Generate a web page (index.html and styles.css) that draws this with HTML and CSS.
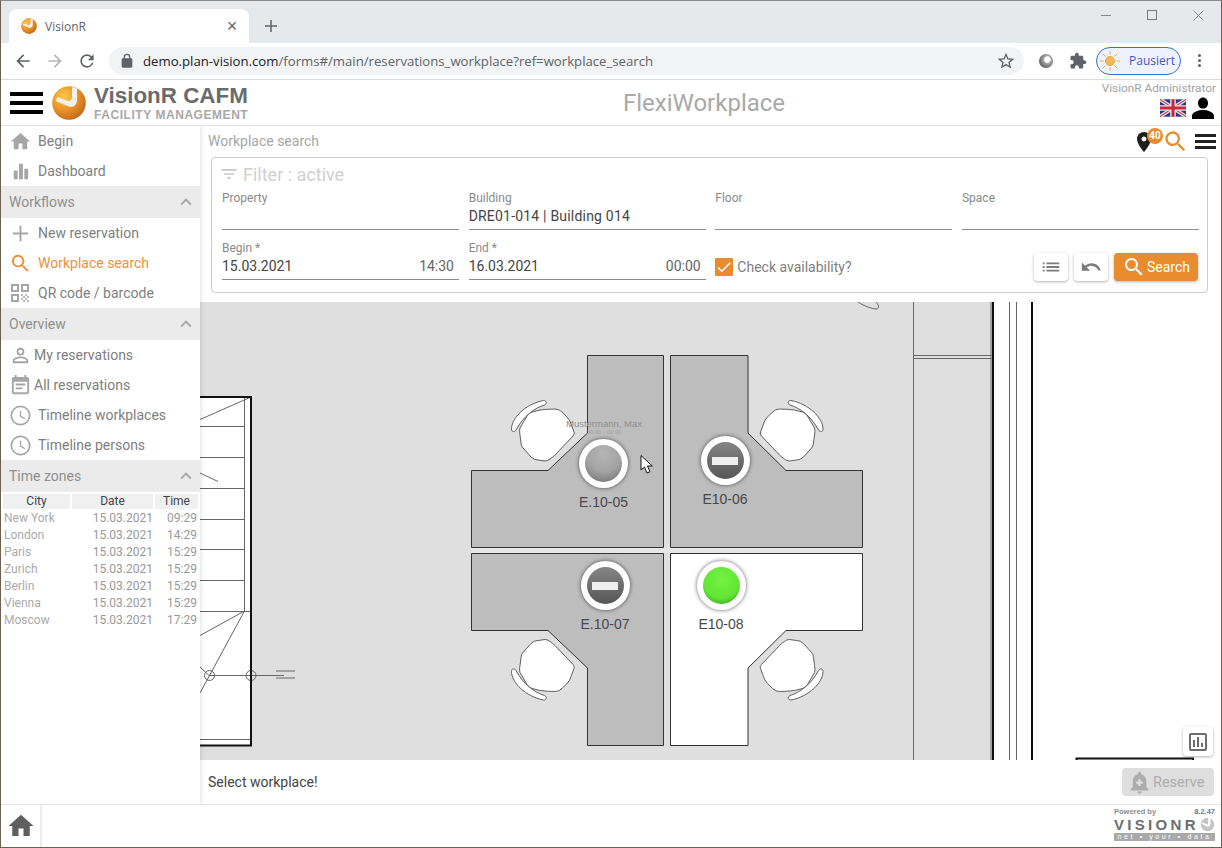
FILE: index.html
```html
<!DOCTYPE html>
<html lang="en">
<head>
<meta charset="utf-8">
<title>VisionR</title>
<link rel="stylesheet" href="styles.css">
</head>
<body>
<svg class="sprite" aria-hidden="true">
  <defs>
    <radialGradient id="orb" cx="35%" cy="30%" r="80%">
      <stop offset="0" stop-color="#f9c94a"/><stop offset=".5" stop-color="#ec9327"/><stop offset="1" stop-color="#b9641a"/>
    </radialGradient>
    <radialGradient id="markGray" cx="50%" cy="25%" r="80%">
      <stop offset="0" stop-color="#b5b5b5"/><stop offset=".6" stop-color="#a2a2a2"/><stop offset="1" stop-color="#777"/>
    </radialGradient>
    <linearGradient id="markDark" x1="0" y1="0" x2="0" y2="1">
      <stop offset="0" stop-color="#858585"/><stop offset="1" stop-color="#565656"/>
    </linearGradient>
    <radialGradient id="markGreen" cx="50%" cy="35%" r="70%">
      <stop offset="0" stop-color="#74f244"/><stop offset=".7" stop-color="#62e534"/><stop offset="1" stop-color="#3fae23"/>
    </radialGradient>
    <symbol id="logo" viewBox="0 0 34 34">
      <circle cx="17" cy="17" r="16.8" fill="url(#orb)"/>
      <path d="M20 1l5 1.500V15q-1 6-7 6L3.500 15l2-4 10.500 4q4 0 4-4z" fill="#f4efe9"/>
    </symbol>
    <symbol id="i-home" viewBox="0 0 24 24"><path d="M10 20v-6h4v6h5v-8h3L12 3 2 12h3v8z"/></symbol>
    <symbol id="i-bars" viewBox="0 0 24 24"><path d="M5 11h4v9H5zM10.500 4h4v16h-4zM16 9h4v11h-4z"/></symbol>
    <symbol id="i-plus" viewBox="0 0 24 24"><path d="M20 13h-7v7h-2v-7H4v-2h7V4h2v7h7z"/></symbol>
    <symbol id="i-search" viewBox="0 0 24 24"><path d="M15.500 14h-.79l-.28-.27A6.500 6.500 0 1 0 13.730 14.430l.27.28v.79l5 4.990L20.490 19zm-6 0a4.500 4.500 0 1 1 0-9 4.500 4.500 0 0 1 0 9z"/></symbol>
    <symbol id="i-qr" viewBox="0 0 20 20"><path d="M1 1h8v8H1zm2 2v4h4V3zM11 1h8v8h-8zm2 2v4h4V3zM1 11h8v8H1zm2 2v4h4v-4z" fill-rule="evenodd"/><path d="M11 11h2v2h-2zM15 11h2v2h-2zM13 13h2v2h-2zM17 13h2v2h-2zM11 15h2v2h-2zM15 15h2v2h-2zM13 17h2v2h-2zM17 17h2v2h-2z" opacity=".75"/></symbol>
    <symbol id="i-person-o" viewBox="0 0 24 24"><path d="M12 5.900a2.100 2.100 0 1 1 0 4.200 2.100 2.100 0 0 1 0-4.200m0 9c2.970 0 6.100 1.460 6.100 2.100v1.100H5.900V17c0-.64 3.130-2.100 6.100-2.100M12 4a4 4 0 1 0 0 8 4 4 0 0 0 0-8zm0 9c-2.670 0-8 1.340-8 4v3h16v-3c0-2.660-5.330-4-8-4z"/></symbol>
    <symbol id="i-event" viewBox="0 0 24 24"><path d="M17 10H7v2h10zm2-7h-1V1h-2v2H8V1H6v2H5c-1.110 0-1.990.9-1.990 2L3 19c0 1.100.89 2 2 2h14c1.100 0 2-.9 2-2V5c0-1.100-.9-2-2-2zm0 16H5V8h14zm-5-5H7v2h7z"/></symbol>
    <symbol id="i-clock" viewBox="0 0 24 24"><path d="M12 1.500a10.500 10.500 0 1 0 0 21 10.500 10.500 0 0 0 0-21zm0 19.200a8.700 8.700 0 1 1 0-17.400 8.700 8.700 0 0 1 0 17.400zM12.700 7h-1.400v6l5 3 .7-1.150-4.300-2.600z"/></symbol>
    <symbol id="i-chev" viewBox="0 0 24 24"><path d="M7.410 15.410L12 10.830l4.590 4.580L18 14l-6-6-6 6z"/></symbol>
    <symbol id="i-filter" viewBox="0 0 24 24"><path d="M10 18h4v-2h-4zM3 6v2h18V6zm3 7h12v-2H6z"/></symbol>
    <symbol id="i-list" viewBox="0 0 24 24"><path d="M3 13h2v-2H3zm0 4h2v-2H3zm0-8h2V7H3zm4 4h14v-2H7zm0 4h14v-2H7zM7 7v2h14V7z"/></symbol>
    <symbol id="i-undo" viewBox="0 0 24 24"><path d="M12.500 8c-2.650 0-5.050.99-6.900 2.600L2 7v9h9l-3.620-3.620c1.390-1.160 3.160-1.880 5.120-1.880 3.540 0 6.550 2.310 7.600 5.500l2.370-.78C21.080 11.030 17.150 8 12.500 8z"/></symbol>
    <symbol id="i-check" viewBox="0 0 24 24"><path d="M9 16.170L4.830 12l-1.420 1.410L9 19 21 7l-1.410-1.410z"/></symbol>
    <symbol id="i-pin" viewBox="0 0 24 24"><path d="M12 2C8.130 2 5 5.130 5 9c0 5.250 7 13 7 13s7-7.750 7-13c0-3.870-3.130-7-7-7zm0 9.500a2.500 2.500 0 0 1 0-5 2.500 2.500 0 0 1 0 5z"/></symbol>
    <symbol id="i-person" viewBox="0 0 24 24"><path d="M12 12.500c3 0 5-2.300 5-5.300S15 1.500 12 1.500 7 4.200 7 7.200s2 5.300 5 5.300zm0 1.500c-4 0-11 1.800-11 6v3h22v-3c0-4.200-7-6-11-6z"/></symbol>
    <symbol id="i-bell" viewBox="0 0 24 24"><path d="M12 22c1.100 0 2-.9 2-2h-4c0 1.100.9 2 2 2zm6-6v-5c0-3.070-1.630-5.640-4.500-6.320V4a1.500 1.500 0 0 0-3 0v.68C7.640 5.360 6 7.920 6 11v5l-2 2v1h16v-1zm-3-3h-2v2h-2v-2H9v-2h2V9h2v2h2z"/></symbol>
    <symbol id="i-poll" viewBox="0 0 24 24"><path d="M19 3H5c-1.100 0-2 .9-2 2v14c0 1.100.9 2 2 2h14c1.100 0 2-.9 2-2V5c0-1.100-.9-2-2-2zm0 16H5V5h14zM7 10h2v7H7zm4-3h2v10h-2zm4 6h2v4h-2z"/></symbol>
    <symbol id="i-puzzle" viewBox="0 0 24 24"><path d="M20.500 11H19V7c0-1.100-.9-2-2-2h-4V3.500a2.500 2.500 0 0 0-5 0V5H4c-1.100 0-1.990.9-1.990 2v3.800H3.500a2.700 2.700 0 0 1 0 5.400H2V20c0 1.100.9 2 2 2h3.800v-1.500a2.700 2.700 0 0 1 5.400 0V22H17c1.100 0 2-.9 2-2v-4h1.500a2.500 2.500 0 0 0 0-5z"/></symbol>
    <symbol id="i-star" viewBox="0 0 24 24"><path d="M22 9.240l-7.190-.62L12 2 9.190 8.630 2 9.240l5.460 4.730L5.820 21 12 17.270 18.180 21l-1.630-7.030zM12 15.400l-3.760 2.270 1-4.280-3.320-2.880 4.380-.38L12 6.100l1.710 4.040 4.380.38-3.320 2.880 1 4.280z"/></symbol>
    <symbol id="i-lock" viewBox="0 0 24 24"><path d="M18 8h-1V6A5 5 0 0 0 7 6v2H6c-1.100 0-2 .9-2 2v10c0 1.100.9 2 2 2h12c1.100 0 2-.9 2-2V10c0-1.100-.9-2-2-2zM9 6a3 3 0 0 1 6 0v2H9z"/></symbol>
    <symbol id="i-back" viewBox="0 0 24 24"><path d="M20 11H7.830l5.590-5.590L12 4l-8 8 8 8 1.410-1.410L7.830 13H20z"/></symbol>
    <symbol id="i-forward" viewBox="0 0 24 24"><path d="M12 4l-1.410 1.410L16.170 11H4v2h12.170l-5.580 5.590L12 20l8-8z"/></symbol>
    <symbol id="i-reload" viewBox="0 0 24 24"><path d="M17.650 6.350A7.960 7.960 0 0 0 12 4a8 8 0 1 0 7.730 10h-2.080A5.990 5.990 0 0 1 12 18a6 6 0 1 1 0-12c1.660 0 3.140.69 4.220 1.780L13 11h7V4z"/></symbol>
    <symbol id="chair" viewBox="0 0 1222 848">
      <path class="seat" d="M527 416q2-3 5-4l8-2q8-1 15-1 4 0 7 3l5 5q3 3 4 7l3 8q1 2-1 4l-18 19q-2 2-5 4-2 2-5 2l-7-1q-4 0-7-3l-8-9q-2-2-2-5l-1-8q-1-4 0-7z"/>
      <path class="seat" d="M511.500 429c0-11 14-25 32-28.500 3.500 0 3.500 3.500 1 4.500-10 3-21 11-28.500 25-2 2.500-4.500 2-4.500-1z"/>
    </symbol>
  </defs>
</svg>

<div class="window">
  <div class="tabbar">
    <div class="tab">
      <svg class="favicon"><use href="#logo"/></svg>
      <span class="tab-title">VisionR</span>
      <span class="tab-x">×</span>
    </div>
    <svg class="ic newtab"><use href="#i-plus"/></svg>
    <div class="winctl">
      <span class="win-min"></span>
      <span class="win-max"></span>
      <svg class="win-close" viewBox="0 0 11 11"><path d="M.5.500l10 10M10.500.500l-10 10"/></svg>
    </div>
  </div>

  <div class="toolbar">
    <svg class="ic nav"><use href="#i-back"/></svg>
    <svg class="ic nav nav-off"><use href="#i-forward"/></svg>
    <svg class="ic nav"><use href="#i-reload"/></svg>
    <div class="omnibox">
      <svg class="ic lock"><use href="#i-lock"/></svg>
      <span class="url"><span class="url-host">demo.plan-vision.com</span>/forms#/main/reservations_workplace?ref=workplace_search</span>
      <svg class="ic star"><use href="#i-star"/></svg>
    </div>
    <span class="ext-orb"></span>
    <svg class="ic puzzle"><use href="#i-puzzle"/></svg>
    <div class="profile">
      <svg class="sun" viewBox="0 0 24 24"><circle cx="12" cy="12" r="5"/><path d="M12 1v4M12 19v4M1 12h4M19 12h4M4 4l3 3M17 17l3 3M20 4l-3 3M7 17l-3 3"/></svg>
      <span>Pausiert</span>
    </div>
    <div class="dots"><i></i><i></i><i></i></div>
  </div>

  <header class="apphead">
    <div class="burger"><i></i><i></i><i></i></div>
    <svg class="brand-logo"><use href="#logo"/></svg>
    <div class="brand">
      <div class="brand-name">VisionR CAFM</div>
      <div class="brand-sub">FACILITY MANAGEMENT</div>
    </div>
    <div class="app-title">FlexiWorkplace</div>
    <div class="userbox">
      <div class="username">VisionR Administrator</div>
      <div class="useractions">
        <svg class="flag" viewBox="0 0 60 40">
          <rect width="60" height="40" fill="#2b3a80"/>
          <path d="M0 0l60 40M60 0L0 40" stroke="#e8e8ee" stroke-width="8"/>
          <path d="M0 0l60 40M60 0L0 40" stroke="#c8283c" stroke-width="2.500"/>
          <path d="M30 0v40M0 20h60" stroke="#e8e8ee" stroke-width="13"/>
          <path d="M30 0v40M0 20h60" stroke="#c8283c" stroke-width="7"/>
        </svg>
        <svg class="ic user"><use href="#i-person"/></svg>
      </div>
    </div>
  </header>

  <div class="main">
    <aside class="sidebar">
      <a class="item"><svg class="ic it-icon"><use href="#i-home"/></svg>Begin</a>
      <a class="item"><svg class="ic it-icon"><use href="#i-bars"/></svg>Dashboard</a>
      <div class="section">Workflows<svg class="ic chev"><use href="#i-chev"/></svg></div>
      <a class="item"><svg class="ic it-icon"><use href="#i-plus"/></svg>New reservation</a>
      <a class="item item-active"><svg class="ic it-icon"><use href="#i-search"/></svg>Workplace search</a>
      <a class="item"><svg class="ic it-icon it-qr"><use href="#i-qr"/></svg>QR code / barcode</a>
      <div class="section">Overview<svg class="ic chev"><use href="#i-chev"/></svg></div>
      <a class="item item-tight"><svg class="ic it-icon"><use href="#i-person-o"/></svg>My reservations</a>
      <a class="item item-tight"><svg class="ic it-icon"><use href="#i-event"/></svg>All reservations</a>
      <a class="item"><svg class="ic it-icon"><use href="#i-clock"/></svg>Timeline workplaces</a>
      <a class="item"><svg class="ic it-icon"><use href="#i-clock"/></svg>Timeline persons</a>
      <div class="section">Time zones<svg class="ic chev"><use href="#i-chev"/></svg></div>
      <table class="zones">
        <thead><tr><th class="c-city">City</th><th class="c-date">Date</th><th class="c-time">Time</th></tr></thead>
        <tbody>
          <tr><td>New York</td><td>15.03.2021</td><td>09:29</td></tr>
          <tr><td>London</td><td>15.03.2021</td><td>14:29</td></tr>
          <tr><td>Paris</td><td>15.03.2021</td><td>15:29</td></tr>
          <tr><td>Zurich</td><td>15.03.2021</td><td>15:29</td></tr>
          <tr><td>Berlin</td><td>15.03.2021</td><td>15:29</td></tr>
          <tr><td>Vienna</td><td>15.03.2021</td><td>15:29</td></tr>
          <tr><td>Moscow</td><td>15.03.2021</td><td>17:29</td></tr>
        </tbody>
      </table>
    </aside>

    <section class="content">
      <div class="crumbbar">
        <span class="crumb">Workplace search</span>
        <div class="crumb-tools">
          <span class="pinwrap">
            <svg class="ic pin"><use href="#i-pin"/></svg>
            <span class="badge">40</span>
          </span>
          <svg class="ic tool-search"><use href="#i-search"/></svg>
          <div class="mini-burger"><i></i><i></i><i></i></div>
        </div>
      </div>

      <form class="panel">
        <div class="panel-head"><svg class="ic filter"><use href="#i-filter"/></svg>Filter : active</div>
        <div class="fields">
          <div class="field"><label>Property</label><div class="value"></div></div>
          <div class="field"><label>Building</label><div class="value value-wide">DRE01-014 | Building 014</div></div>
          <div class="field"><label>Floor</label><div class="value"></div></div>
          <div class="field"><label>Space</label><div class="value"></div></div>
          <div class="field"><label>Begin *</label><div class="value"><span>15.03.2021</span><span class="time">14:30</span></div></div>
          <div class="field"><label>End *</label><div class="value"><span>16.03.2021</span><span class="time">00:00</span></div></div>
          <div class="check"><span class="box"><svg class="ic"><use href="#i-check"/></svg></span>Check availability?</div>
          <div class="actions">
            <button type="button" class="btn"><svg class="ic"><use href="#i-list"/></svg></button>
            <button type="button" class="btn"><svg class="ic"><use href="#i-undo"/></svg></button>
            <button type="button" class="btn btn-primary"><svg class="ic"><use href="#i-search"/></svg>Search</button>
          </div>
        </div>
      </form>

      <div class="plan">
        <svg class="plan-svg" viewBox="200 302 1021 458">
          <rect x="200" y="302" width="793" height="458" fill="#dfdfdf"/>
          <rect x="994" y="302" width="228" height="458" fill="#fff"/>

          <!-- stairs -->
          <rect x="200" y="397" width="51" height="348.500" fill="#fff"/>
          <path class="ln" d="M244.500 397V611M200 426.500h44.500M200 457.500h44.500M200 488.500h44.500M200 519.500h44.500M200 549.500h44.500M200 580.500h44.500M200 611.500h51M251 397l-51 22.500M200 473l18 8.500M244.500 611L200 635.500M244.500 611L200 693M200 667l9 8.500M209 675.500h75M276 671h19M276 678h19M200 739.500h51"/>
          <circle class="ln" cx="209.500" cy="675.500" r="5"/>
          <circle class="ln" cx="251" cy="675.500" r="5"/>
          <path class="wall" d="M200 397h51v348.500h-51"/>

          <!-- right walls -->
          <path class="ln" d="M913.500 302V760M913.500 355.500h78M913.500 358.500h78M991 302V760M1009.500 302V760M1016.500 302V760M858 302c6 4 14 7 19 7 3-1 1-5-1-7"/>
          <path class="wall" d="M993 302V760M1032 302V760M1076.500 760v-1.500h116.500v1.500"/>

          <!-- desks -->
          <rect x="471" y="547" width="392" height="6" fill="#e6e6e6"/>
          <polygon class="desk" points="587.500,355.500 663.500,355.500 663.500,547.500 471.500,547.500 471.500,470.500 548,470.500 587.500,433"/>
          <polygon class="desk" points="670.500,355.500 748,355.500 748,433 786,470.500 862.500,470.500 862.500,547.500 670.500,547.500"/>
          <polygon class="desk" points="471.500,553.500 663.500,553.500 663.500,745.500 587.500,745.500 587.500,668 548,630.500 471.500,630.500"/>
          <polygon class="desk desk-free" points="670.500,553.500 862.500,553.500 862.500,630.500 786,630.500 748,668 748,745.500 670.500,745.500"/>

          <!-- chairs -->
          <use href="#chair" width="1222" height="848" x="0" y="0"/>
          <use href="#chair" width="1222" height="848" transform="translate(1334.500 0) scale(-1 1)"/>
          <use href="#chair" width="1222" height="848" transform="translate(0 1100.500) scale(1 -1)"/>
          <use href="#chair" width="1222" height="848" transform="translate(1334.500 1100.500) scale(-1 -1)"/>

          <!-- markers -->
          <text class="occupant" x="604" y="427">Mustermann, Max</text>
          <text class="occupant-time" x="604" y="434">00:00 - 00:00</text>

          <circle class="ring" cx="603.500" cy="463.500" r="24.500"/>
          <circle cx="603.500" cy="463.500" r="18.500" fill="url(#markGray)"/>
          <text class="spot" x="603.500" y="507">E.10-05</text>

          <circle class="ring" cx="725.500" cy="460.500" r="24.500"/>
          <circle cx="725.500" cy="460.500" r="18.500" fill="url(#markDark)"/>
          <rect x="712" y="457" width="26" height="8" fill="#eee"/>
          <text class="spot" x="725" y="504">E10-06</text>

          <circle class="ring" cx="605.500" cy="585.500" r="24.500"/>
          <circle cx="605.500" cy="585.500" r="18.500" fill="url(#markDark)"/>
          <rect x="592" y="582" width="26" height="8" fill="#eee"/>
          <text class="spot" x="605" y="629">E.10-07</text>

          <circle class="ring" cx="721.500" cy="585.500" r="24.500"/>
          <circle cx="721.500" cy="585.500" r="18.500" fill="url(#markGreen)"/>
          <text class="spot" x="721" y="629">E10-08</text>

          <path class="cursor" d="M641 455.500V470l3.500-3 2.500 6 3-1.300-2.500-5.700h4.800z"/>
        </svg>
        <button type="button" class="chart-btn"><svg class="ic"><use href="#i-poll"/></svg></button>
      </div>

      <div class="statusbar">
        <span class="status-text">Select workplace!</span>
        <button type="button" class="reserve"><svg class="ic"><use href="#i-bell"/></svg>Reserve</button>
      </div>
    </section>
  </div>

  <footer class="appfoot">
    <div class="foot-home"><svg class="ic"><use href="#i-home"/></svg></div>
    <div class="foot-brand">
      <div class="foot-top"><span>Powered by</span><span class="foot-ver">8.2.47</span></div>
      <div class="foot-name">VISIONR<svg class="foot-orb" viewBox="0 0 20 20"><circle cx="10" cy="10" r="9" fill="#c4c4c4"/><path d="M11 1h3v9q-1 3-4 3L2 9l1-2 7 3q1 0 1-2z" fill="#fff"/></svg></div>
      <div class="foot-tag">net • your • data</div>
    </div>
  </footer>
</div>
</body>
</html>
```

FILE: styles.css
```css
* { box-sizing: border-box; }
html, body { margin: 0; padding: 0; background: #fff; }
body { font-family: Roboto, "Liberation Sans", sans-serif; overflow: hidden; }
.sprite { position: absolute; width: 0; height: 0; }
.ic { width: 24px; height: 24px; fill: currentColor; display: block; flex: none; }

.window {
  width: 1222px; height: 848px; display: flex; flex-direction: column;
  border-top: 1px solid #8b8b8b; border-left: 1px solid #6e6050;
  border-right: 1px solid #6e6050; border-bottom: 1px solid #6e6050;
  overflow: hidden;
}

/* browser chrome */
.tabbar { height: 42px; flex: none; background: #e6e9ec; display: flex; align-items: flex-end; padding-left: 8px; }
.tab { width: 240px; height: 34px; background: #fff; border-radius: 8px 8px 0 0; display: flex; align-items: center; padding: 0 9px 0 12px; }
.favicon { width: 16px; height: 16px; flex: none; }
.tab-title { font: 12px "Open Sans", sans-serif; color: #5f6368; margin-left: 8px; flex: 1; }
.tab-x { font: 18px "Liberation Sans", sans-serif; color: #5f6368; width: 16px; text-align: center; }
.newtab { width: 18px; height: 18px; color: #5f6368; margin: 0 0 8px 13px; }
.winctl { margin-left: auto; align-self: flex-start; display: flex; align-items: center; height: 28px; padding-right: 17px; gap: 36px; }
.win-min { width: 10px; height: 1px; background: #8a8a8a; }
.win-max { width: 10px; height: 10px; border: 1px solid #777; }
.win-close { width: 11px; height: 11px; fill: none; stroke: #8a8a8a; stroke-width: 1; }

.toolbar { height: 37px; flex: none; background: #fff; border-bottom: 1px solid #dadce0; display: flex; align-items: center; padding: 0 0 1px 0; }
.nav { width: 20px; height: 20px; color: #5f6368; margin-left: 12px; }
.nav-off { color: #b4b6b9; }
.omnibox { width: 915px; height: 28px; margin-left: 12px; background: #f1f3f4; border-radius: 14px; display: flex; align-items: center; padding: 0 8px 0 10px; }
.lock { width: 16px; height: 16px; color: #5f6368; }
.url { font: 13.180px "Open Sans", sans-serif; color: #5f6368; margin-left: 8px; flex: 1; white-space: nowrap; }
.url-host { color: #202124; }
.star { width: 20px; height: 20px; color: #5f6368; }
.ext-orb { width: 14px; height: 14px; border-radius: 50%; margin-left: 15px; background: radial-gradient(circle at 60% 40%, #fff 0 25%, #aaa 30%, #555 80%); }
.puzzle { width: 18px; height: 18px; color: #5f6368; margin-left: 16px; }
.profile { width: 85px; height: 28px; margin-left: 9px; border: 1px solid #2f74d0; border-radius: 14px; background: #edf2fc; display: flex; align-items: center; padding-left: 2px; font: 12px "Open Sans", sans-serif; color: #4a55c4; gap: 8px; }
.sun { width: 22px; height: 22px; fill: #f3b75a; stroke: #eea43c; stroke-width: 1; flex: none; }
.dots { margin-left: 17px; display: flex; flex-direction: column; gap: 2px; }
.dots i { width: 3px; height: 3px; border-radius: 50%; background: #5f6368; display: block; }

/* app header */
.apphead { height: 46px; flex: none; border-bottom: 1px solid #e2e2e2; display: flex; align-items: center; position: relative; padding-left: 9px; }
.burger { width: 33px; display: flex; flex-direction: column; gap: 5px; }
.burger i { height: 4px; background: #000; display: block; }
.brand-logo { width: 34px; height: 34px; margin-left: 9px; flex: none; }
.brand { margin-left: 8px; width: 170px; }
.brand-name { font: bold 22.400px/26px "Liberation Sans", sans-serif; color: #6b6b6b; white-space: nowrap; }
.brand-sub { font: bold 12px/13px "Liberation Sans", sans-serif; color: #a8a8a8; letter-spacing: .55px; white-space: nowrap; }
.app-title { flex: 1; text-align: center; font-size: 24px; color: #a9a9a9; padding-left: 48px; white-space: nowrap; }
.userbox { width: 120px; margin-right: 5px; display: flex; flex-direction: column; align-items: flex-end; align-self: flex-start; padding-top: 1px; }
.username { font-size: 11.800px; line-height: 15px; color: #a2a2a2; white-space: nowrap; }
.useractions { display: flex; align-items: center; gap: 5px; margin-right: 1px; }
.flag { width: 26px; height: 20px; display: block; }
.user { color: #000; width: 24px; height: 24px; }

/* main */
.main { flex: 1; display: flex; min-height: 0; overflow: hidden; }
.sidebar { width: 199px; flex: none; background: #fff; box-shadow: 1px 0 5px rgba(0,0,0,.12); position: relative; z-index: 2; }
.item { height: 30px; display: flex; align-items: center; padding-left: 8px; font-size: 14px; color: #808080; gap: 6px; white-space: nowrap; }
.it-icon { width: 23px; height: 23px; color: #a6a6a6; }
.it-qr { width: 20px; height: 20px; margin: 0 2px 0 1px; }
.item-tight { gap: 2px; }
.item-active, .item-active .it-icon { color: #ee9138; }
.section { height: 32px; background: #ebebeb; display: flex; align-items: center; justify-content: space-between; padding: 0 3px 0 8px; font-size: 14px; color: #8f8f8f; }
.chev { width: 22px; height: 22px; color: #a8a8a8; }
.zones { width: 199px; margin: 0; border-spacing: 2px 0; border-collapse: separate; table-layout: fixed; font-size: 12px; padding-top: 2px; }
.zones th { height: 15px; padding: 0; background: #f0f0f0; font-weight: 400; color: #444; line-height: 15px; text-align: center; }
.c-city { width: 67px; } .c-date { width: 81px; } .c-time { width: 43px; }
.zones td { height: 17px; padding: 0 1px; line-height: 17px; color: #999; text-align: right; white-space: nowrap; }
.zones td:first-child { text-align: left; color: #aaa; }
.zones td:nth-child(2) { padding-right: 0; }
.zones tbody tr:first-child td { height: 18px; padding-top: 1px; }

.content { flex: 1; min-width: 0; display: flex; flex-direction: column; }
.crumbbar { height: 31px; flex: none; display: flex; align-items: center; justify-content: space-between; padding: 0 5px 1px 8px; }
.crumb { font-size: 14px; color: #a6a6a6; }
.crumb-tools { display: flex; align-items: center; margin-top: 1px; }
.pinwrap { position: relative; width: 24px; height: 24px; display: block; }
.pin { color: #1f1f1f; }
.badge { position: absolute; left: 15px; top: -2px; width: 16px; height: 16px; border-radius: 50%; background: #e88c2f; color: #fff; font-size: 10px; font-weight: 700; line-height: 16px; text-align: center; }
.tool-search { color: #e88c2f; margin-left: 6px; width: 27px; height: 27px; }
.mini-burger { width: 21px; margin-left: 6px; display: flex; flex-direction: column; gap: 3px; }
.mini-burger i { height: 3px; background: #222; display: block; }

.panel { height: 136px; flex: none; margin: 0 13px 9px 11px; border: 1px solid #cdcdcd; border-radius: 4px; padding: 0 9px 0 10px; }
.panel-head { height: 32px; display: flex; align-items: center; font-size: 18px; color: #cfcfcf; gap: 4px; margin-left: -3px; }
.filter { width: 20px; height: 20px; color: #c8c8c8; }
.fields { display: grid; grid-template-columns: repeat(4, 237px); column-gap: 9.670px; row-gap: 10px; }
.field label { display: block; font-size: 12px; line-height: 16px; color: #8a8a8a; }
.value { height: 24px; border-bottom: 1px solid #8c8c8c; font-size: 14px; line-height: 20px; color: #444; display: flex; justify-content: space-between; padding-right: 5px; }
.value-wide { letter-spacing: .2px; }
.time { color: #666; }
.check { display: flex; align-items: center; gap: 4px; font-size: 14px; color: #808080; padding-top: 14px; height: 40px; }
.box { width: 18px; height: 18px; background: #e88c2f; color: #fff; border-radius: 1px; display: block; }
.box .ic { width: 18px; height: 18px; }
.actions { display: flex; justify-content: flex-end; gap: 6px; padding: 13px 1px 0 0; }
.btn { width: 34px; height: 28px; border: 0; border-radius: 4px; background: #fff; color: #7b7b7b; padding: 0; display: flex; align-items: center; justify-content: center; box-shadow: 0 1px 3px rgba(0,0,0,.3); font-family: inherit; }
.btn .ic { width: 22px; height: 22px; }
.btn-primary { width: 84px; background: #e88c2f; color: #fff; font-size: 14px; gap: 1px; }
.btn-primary .ic { width: 24px; height: 24px; }

.plan { flex: 1; min-height: 0; position: relative; overflow: hidden; background: #dfdfdf; }
.plan-svg { display: block; width: 100%; height: 100%; }
.ln { fill: none; stroke: #666; stroke-width: 1; }
.wall { fill: none; stroke: #111; stroke-width: 2; }
.desk { fill: #bdbdbd; stroke: #333; stroke-width: 1; }
.desk-free { fill: #fff; }
.seat { fill: #fff; stroke: #5f5f5f; stroke-width: 1; stroke-linejoin: round; }
.ring { fill: #fff; filter: drop-shadow(0 0 2px rgba(0,0,0,.6)); }
.spot { font: 14px "Liberation Sans", sans-serif; fill: #484848; text-anchor: middle; }
.occupant { font: 9.500px "Liberation Sans", sans-serif; fill: #8f8f8f; text-anchor: middle; }
.occupant-time { font: 6px "Liberation Sans", sans-serif; fill: #a2a2a2; text-anchor: middle; }
.cursor { fill: #fff; stroke: #111; stroke-width: 1; }
.chart-btn { position: absolute; right: 8px; bottom: 4px; width: 30px; height: 29px; border: 0; border-radius: 4px; background: #fff; color: #6d6d6d; padding: 0; display: flex; align-items: center; justify-content: center; box-shadow: 0 1px 3px rgba(0,0,0,.3); }

.statusbar { height: 44px; flex: none; display: flex; align-items: center; justify-content: space-between; padding: 0 7px 0 8px; }
.status-text { font-size: 14px; color: #444; }
.reserve { width: 92px; height: 28px; border: 0; border-radius: 4px; background: #dedede; color: #adadad; font: 14.500px Roboto, sans-serif; display: flex; align-items: center; padding: 0 0 0 4px; }
.reserve .ic { width: 27px; height: 27px; }

.appfoot { height: 43px; flex: none; border-top: 1px solid #e2e2e2; display: flex; justify-content: space-between; }
.foot-home { width: 41px; border-right: 2px solid #ececec; display: flex; align-items: center; justify-content: center; color: #5f5f5f; }
.foot-home .ic { width: 30px; height: 30px; }
.foot-brand { width: 101px; margin-right: 6px; padding-top: 3px; font-family: "Liberation Sans", sans-serif; }
.foot-top { display: flex; justify-content: space-between; height: 8px; font-size: 7.500px; line-height: 8px; font-weight: 700; color: #8d8d8d; }
.foot-ver { color: #6c7a8c; }
.foot-name { display: flex; align-items: center; justify-content: space-between; height: 17px; font-size: 15px; line-height: 17px; font-weight: 700; letter-spacing: 3.300px; color: #6d6d6d; }
.foot-orb { width: 15px; height: 15px; flex: none; }
.foot-tag { height: 8px; background: #a9a9a9; color: #fff; font-size: 7px; line-height: 8px; letter-spacing: 2.600px; text-align: center; white-space: nowrap; overflow: hidden; }
```
